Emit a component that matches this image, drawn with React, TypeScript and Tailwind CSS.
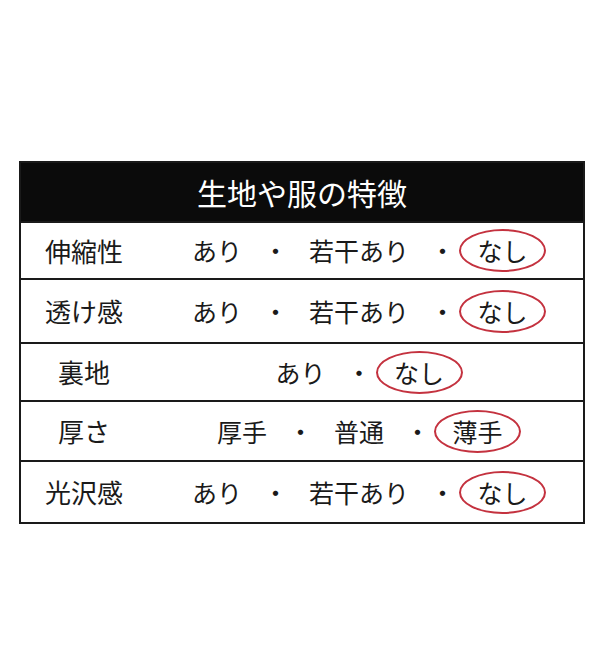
const rows: { label: string; items: string[]; h: string }[] = [
  { label: '伸縮性', items: ['あり', '若干あり'], h: 'h-[57px]' },
  { label: '透け感', items: ['あり', '若干あり'], h: 'h-[64px]' },
  { label: '裏地', items: ['あり'], h: 'h-[58px]' },
  { label: '厚さ', items: ['厚手', '普通'], h: 'h-[60px]' },
  { label: '光沢感', items: ['あり', '若干あり'], h: 'h-[62px]' },
];

const circled = ['なし', 'なし', 'なし', '薄手', 'なし'];

export default function App() {
  return (
    <div
      className="w-[600px] h-[660px] bg-white pt-[161px] pl-[19px]"
      style={{ fontFamily: '"Noto Sans CJK JP", "Noto Sans", sans-serif' }}
    >
      <div className="w-[566px] border-2 border-[#1a1a1a] text-[#1a1a1a]">
        {/* Header */}
        <div className="h-[58px] bg-[#0b0b0b] flex items-center justify-center text-white text-[30px] leading-none">
          生地や服の特徴
        </div>

        {rows.map((row, i) => (
          <div
            key={row.label}
            className={`flex items-center border-t-2 border-[#1a1a1a] ${row.h}`}
          >
            <div className="w-[126px] shrink-0 text-center text-[26px] leading-none">{row.label}</div>
            <div className="flex-1 flex items-center justify-center gap-[21px] pl-[8px] text-[25px] leading-none">
              {row.items.map((item) => (
                <div key={item} className="flex items-center gap-[21px]">
                  <span>{item}</span>
                  <span>・</span>
                </div>
              ))}
              <span className="ml-[-17px] w-[87px] h-[43px] flex items-center justify-center border-2 border-[#c4323f] rounded-[50%]">
                {circled[i]}
              </span>
            </div>
          </div>
        ))}
      </div>
    </div>
  );
}
